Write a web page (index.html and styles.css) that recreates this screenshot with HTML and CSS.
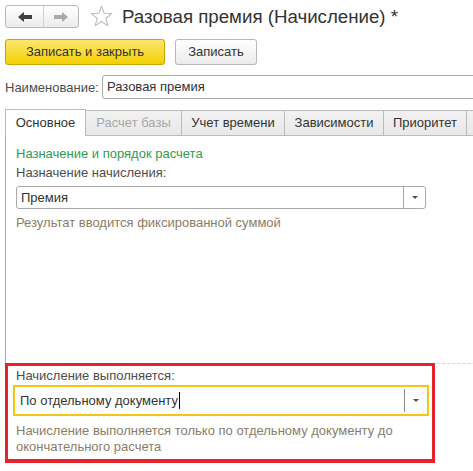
FILE: index.html
```html
<!DOCTYPE html>
<html lang="ru">
<head>
<meta charset="utf-8">
<title>Разовая премия (Начисление)</title>
<link rel="stylesheet" href="styles.css">
</head>
<body>
<div class="page">
  <div class="header">
    <div class="nav">
      <div class="nav-btn nav-back">
        <svg width="14" height="10" viewBox="0 0 14 10"><path d="M0 5 L6 0 V3 H14 V7 H6 V10 Z" fill="#404040"/></svg>
      </div>
      <div class="nav-btn">
        <svg width="14" height="10" viewBox="0 0 14 10"><path d="M14 5 L8 0 V3 H0 V7 H8 V10 Z" fill="#a8a8a8"/></svg>
      </div>
    </div>
    <svg class="star" width="23" height="23" viewBox="0 0 23 23"><path d="M11.5 1.2 L14.2 8.3 L21.8 8.6 L15.8 13.3 L17.9 20.7 L11.5 16.5 L5.1 20.7 L7.2 13.3 L1.2 8.6 L8.8 8.3 Z" fill="none" stroke="#bdbdbd" stroke-width="1.1" stroke-linejoin="round"/></svg>
    <h1 class="title">Разовая премия (Начисление) *</h1>
  </div>

  <div class="toolbar">
    <div class="btn btn-primary">Записать и закрыть</div>
    <div class="btn btn-plain">Записать</div>
  </div>

  <div class="name-row">
    <span class="name-label">Наименование:</span>
    <div class="name-input">Разовая премия</div>
  </div>

  <div class="tabs">
    <div class="tab tab-active w1">Основное</div>
    <div class="tab tab-disabled w2">Расчет базы</div>
    <div class="tab w3">Учет времени</div>
    <div class="tab w4">Зависимости</div>
    <div class="tab w5">Приоритет</div>
    <div class="tab w6"></div>
  </div>

  <div class="panel">
    <div class="section">
      <div class="group-title">Назначение и порядок расчета</div>
      <div class="field-label">Назначение начисления:</div>
      <div class="select">
        <div class="select-text">Премия</div>
        <div class="select-btn"><span class="arrow"></span></div>
      </div>
      <div class="hint">Результат вводится фиксированной суммой</div>
    </div>

    <div class="highlight">
      <div class="field-label">Начисление выполняется:</div>
      <div class="focus-select">
        <div class="select-text">По отдельному документу<span class="caret"></span></div>
        <div class="focus-btn"><span class="arrow"></span></div>
      </div>
      <div class="hint hint-multi">Начисление выполняется только по отдельному документу до окончательного расчета</div>
    </div>
  </div>
</div>
</body>
</html>
```

FILE: styles.css
```css
html, body {
  margin: 0;
  padding: 0;
  background: #ffffff;
  overflow: hidden;
}

body {
  font-family: "Liberation Sans", Arial, sans-serif;
  font-size: 13px;
  color: #4d4d4d;
}

.page {
  width: 640px;
  padding: 5px 0 0 5px;
}

/* header */
.header {
  display: flex;
  align-items: center;
  height: 23px;
}

.nav {
  display: flex;
  width: 74px;
  height: 23px;
  box-sizing: border-box;
  border: 1px solid #b9b9b9;
  border-radius: 3px;
  background: linear-gradient(#ffffff, #ececec);
}

.nav-btn {
  flex: 1;
  display: flex;
  align-items: center;
  justify-content: center;
}

.nav-back {
  flex: 0 0 37px;
  border-right: 1px solid #d2d2d2;
}

.star {
  margin-left: 11px;
  flex: 0 0 23px;
}

.title {
  margin: 0 0 0 9px;
  font-size: 18.7px;
  font-weight: normal;
  color: #333333;
  line-height: 23px;
  white-space: nowrap;
}

/* toolbar */
.toolbar {
  display: flex;
  margin-top: 11px;
  height: 26px;
}

.btn {
  box-sizing: border-box;
  height: 26px;
  line-height: 24px;
  text-align: center;
  border-radius: 3px;
  color: #333333;
}

.btn-primary {
  width: 160px;
  border: 1px solid #c4a800;
  background: linear-gradient(#fbe770, #f3d000);
}

.btn-plain {
  width: 82px;
  margin-left: 10px;
  border: 1px solid #b8b8b8;
  background: linear-gradient(#ffffff, #ebebeb);
}

/* name row */
.name-row {
  display: flex;
  align-items: center;
  margin-top: 10px;
  height: 24px;
}

.name-label {
  flex: 0 0 97px;
}

.name-input {
  flex: 0 0 420px;
  box-sizing: border-box;
  height: 24px;
  line-height: 22px;
  padding-left: 4px;
  border: 1px solid #a9a9a9;
  border-radius: 3px;
  color: #333333;
}

/* tabs */
.tabs {
  display: flex;
  align-items: flex-end;
  margin-top: 10px;
  height: 27px;
}

.tab {
  box-sizing: border-box;
  height: 26px;
  line-height: 24px;
  text-align: center;
  white-space: nowrap;
  overflow: hidden;
  color: #333333;
  background: linear-gradient(#f2f2f2, #e8e8e8);
  border-top: 1px solid #bcbcbc;
  border-right: 1px solid #bcbcbc;
  border-bottom: 1px solid #bcbcbc;
}

.tab-active {
  height: 27px;
  line-height: 26px;
  background: #ffffff;
  border-left: 1px solid #bcbcbc;
  border-bottom: none;
}

.tab-disabled {
  color: #a8a8a8;
}

.w1 { width: 81px; }
.w2 { width: 96px; }
.w3 { width: 103px; }
.w4 { width: 99px; }
.w5 { width: 83px; }
.w6 { width: 90px; }

/* panel */
.panel {
  width: 600px;
  border-left: 1px solid #ababab;
}

.section {
  box-sizing: border-box;
  height: 228px;
  padding: 10px 0 0 10px;
  border-bottom: 1px dashed #d4d4d4;
}

.group-title {
  line-height: 16px;
  color: #2f9a53;
}

.field-label {
  line-height: 16px;
  margin-top: 3px;
  color: #4d4d4d;
}

.select {
  display: flex;
  margin-top: 5px;
  width: 410px;
  height: 23px;
  box-sizing: border-box;
  border: 1px solid #a9a9a9;
  border-radius: 3px;
}

.select-text {
  flex: 1;
  padding-left: 4px;
  line-height: 21px;
  color: #333333;
  white-space: nowrap;
}

.select-btn {
  flex: 0 0 21px;
  border-left: 1px solid #a9a9a9;
  display: flex;
  align-items: center;
  justify-content: center;
}

.arrow {
  width: 0;
  height: 0;
  border-left: 3px solid transparent;
  border-right: 3px solid transparent;
  border-top: 3px solid #505050;
}

.hint {
  margin-top: 6px;
  line-height: 16px;
  color: #8a7d66;
}

/* highlighted group */
.highlight {
  margin-top: -1px;
  margin-left: -1px;
  width: 430px;
  box-sizing: border-box;
  border: 3px solid #e4222b;
  border-bottom-width: 4px;
  padding: 2px 8px 4px 8px;
  background: #ffffff;
}

.highlight .field-label {
  margin-top: 0;
}

.focus-select {
  display: flex;
  margin-top: 1px;
  margin-left: -3px;
  width: 416px;
  height: 31px;
  box-sizing: border-box;
  border: 2px solid #f5c518;
}

.focus-select .select-text {
  padding-left: 5px;
  line-height: 27px;
  display: flex;
  align-items: center;
}

.caret {
  display: inline-block;
  width: 1px;
  height: 17px;
  margin-left: 1px;
  background: #000000;
}

.focus-btn {
  flex: 0 0 22px;
  margin: 2px 0;
  border-left: 1px solid #8c8c8c;
  display: flex;
  align-items: center;
  justify-content: center;
}

.hint-multi {
  margin-top: 7px;
  width: 400px;
}
```
